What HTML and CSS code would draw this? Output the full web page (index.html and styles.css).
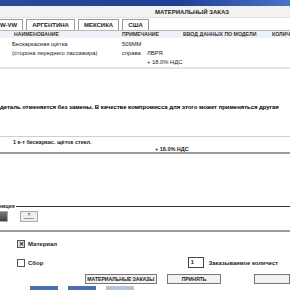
FILE: index.html
```html
<!DOCTYPE html>
<html lang="ru">
<head>
  <meta charset="UTF-8">
  <title>Материальный заказ</title>
  <link rel="stylesheet" href="styles.css">
</head>
<body>
  <div class="titlebar"></div>
  <div class="caption">МАТЕРИАЛЬНЫЙ ЗАКАЗ</div>

  <div class="tabs">
    <span class="tab">W-VW</span>
    <span class="tab">АРГЕНТИНА</span>
    <span class="tab">МЕКСИКА</span>
    <span class="tab">США</span>
  </div>

  <div class="grid head">
    <span>НАИМЕНОВАНИЕ</span>
    <span>ПРИМЕЧАНИЕ</span>
    <span class="model">ВВОД ДАННЫХ ПО МОДЕЛИ</span>
    <span>КОЛИЧ</span>
  </div>

  <div class="items">
    <div class="grid row">
      <span>Бескаркасная щётка</span>
      <span>509ММ</span>
      <span></span>
    </div>
    <div class="grid row">
      <span>(сторона переднего пассажира)</span>
      <span>справа</span>
      <span>ЛВРЯ</span>
    </div>
    <div class="grid row">
      <span></span>
      <span></span>
      <span>+ 18.0% НДС</span>
    </div>
  </div>

  <div class="notice">
    <p>деталь отменяется без замены. В качестве компромисса для этого может применяться другая</p>
  </div>

  <div class="summary">
    <span class="sum-name">1 к-т бескаркас. щёток стекл.</span>
    <span class="sum-tax">+ 18.0% НДС</span>
  </div>

  <div class="group">
    <div class="group-title">
      <span>нкция</span>
      <span class="rule"></span>
    </div>
    <div class="tools">
      <span class="tool dark"></span>
      <span class="tool"><b>?</b><i>СЕРВИС</i></span>
    </div>
  </div>

  <div class="options">
    <label class="check"><span class="box checked">✕</span>Материал</label>
    <div class="line">
      <label class="check"><span class="box"></span>Сбор</label>
      <div class="qty">
        <span class="qty-input">1</span>
        <span>Заказываемое количест</span>
      </div>
    </div>
    <div class="buttons">
      <span class="btn wide">МАТЕРИАЛЬНЫЕ ЗАКАЗЫ</span>
      <span class="btn mid">ПРИНЯТЬ</span>
      <span class="btn stub"></span>
    </div>
  </div>

  <div class="taskbar">
    <span class="task"></span>
    <span class="task"></span>
    <span class="task light"></span>
  </div>
</body>
</html>
```

FILE: styles.css
```css
body {
  margin: 0;
  width: 290px;
  height: 290px;
  overflow: hidden;
  background: #ffffff;
  font-family: "Liberation Sans", Arial, sans-serif;
  font-size: 6px;
  color: #222;
}

.titlebar {
  height: 6px;
  background: linear-gradient(to right, #2a4a9c, #1d3f94 60%, #4a72c8);
}

.caption {
  height: 11px;
  line-height: 12px;
  background: #f2f2f2;
  border-bottom: 1px solid #e2e2e2;
  padding-left: 155px;
  font-weight: bold;
  font-size: 6px;
}

.tabs {
  display: flex;
  gap: 3px;
  height: 11px;
  padding-top: 1px;
  margin-left: -6px;
  border-bottom: 1px solid #b8b8b8;
}

.tab {
  border: 1px solid #999;
  border-bottom: none;
  padding: 2px 5px 0;
  font-weight: bold;
  font-size: 6px;
  background: #fff;
}

.grid {
  display: grid;
  grid-template-columns: 110px 25px 125px auto;
  padding-left: 12px;
}

.head {
  height: 7px;
  line-height: 7px;
  font-size: 5.2px;
  font-weight: bold;
  color: #333;
  background: #eef1f6;
  white-space: nowrap;
}

.head span:first-child {
  padding-left: 2px;
}

.head .model {
  padding-left: 36px;
}

.items {
  height: 27px;
  padding-top: 2px;
  border-bottom: 2px solid #e4e4e4;
}

.row {
  height: 9px;
  line-height: 9px;
  font-size: 5.8px;
}

.notice {
  height: 32px;
  padding-top: 35px;
  border-bottom: 1px solid #cfcfcf;
}

.notice p {
  margin: 0;
  white-space: nowrap;
  font-weight: bold;
  font-size: 6px;
  letter-spacing: -0.05px;
  color: #000;
}

.summary {
  display: flex;
  height: 15px;
  border-bottom: 2px solid #9a9a9a;
  font-size: 5.5px;
  font-weight: bold;
}

.sum-name {
  width: 142px;
  padding: 2px 0 0 13px;
}

.sum-tax {
  padding-top: 9px;
}

.group {
  margin-top: 49px;
  height: 27px;
  border-bottom: 2px solid #9a9a9a;
}

.group-title {
  display: flex;
  align-items: center;
  gap: 1px;
  height: 6px;
  font-size: 5px;
  font-weight: bold;
}

.rule {
  flex: 1;
  border-top: 1px solid #333;
}

.tools {
  display: flex;
  gap: 12px;
  margin-top: 2px;
}

.tool {
  width: 16px;
  height: 9px;
  border: 1px solid #aaa;
  background: #eee;
  display: flex;
  flex-direction: column;
  align-items: center;
  font-size: 4px;
  line-height: 5px;
}

.tool.dark {
  width: 7px;
  margin-left: -1px;
  background: linear-gradient(#777, #444);
}

.tool i {
  font-style: normal;
  font-size: 2.5px;
  line-height: 3px;
}

.options {
  padding: 8px 0 0 17px;
}

.check {
  display: flex;
  align-items: center;
  gap: 3px;
  height: 8px;
  font-weight: bold;
  font-size: 6px;
}

.box {
  width: 6px;
  height: 6px;
  border: 1px solid #555;
  font-size: 6px;
  line-height: 6px;
  text-align: center;
  background: #fff;
}

.box.checked {
  background: #ddd;
}

.line {
  display: flex;
  align-items: center;
  justify-content: space-between;
  margin-top: 9px;
  padding-right: 12px;
}

.qty {
  display: flex;
  align-items: center;
  gap: 5px;
  font-size: 5.8px;
  font-weight: bold;
}

.qty-input {
  width: 12px;
  height: 9px;
  border: 1px solid #444;
  line-height: 9px;
  padding-left: 2px;
}

.buttons {
  display: flex;
  gap: 10px;
  margin-top: 6px;
  margin-left: 68px;
}

.btn {
  height: 8px;
  line-height: 8px;
  border: 1px solid #777;
  background: #f2f2f2;
  text-align: center;
  font-size: 5.2px;
  font-weight: bold;
  letter-spacing: -0.1px;
  white-space: nowrap;
  overflow: hidden;
}

.wide {
  width: 83px;
}

.mid {
  width: 63px;
}

.stub {
  width: 40px;
  margin-left: 23px;
}

.taskbar {
  display: flex;
  gap: 10px;
  margin-top: 2px;
  padding-left: 30px;
  height: 6px;
}

.task {
  width: 28px;
  background: #4a6fae;
}

.task.light {
  background: #b6c4dc;
}
```
